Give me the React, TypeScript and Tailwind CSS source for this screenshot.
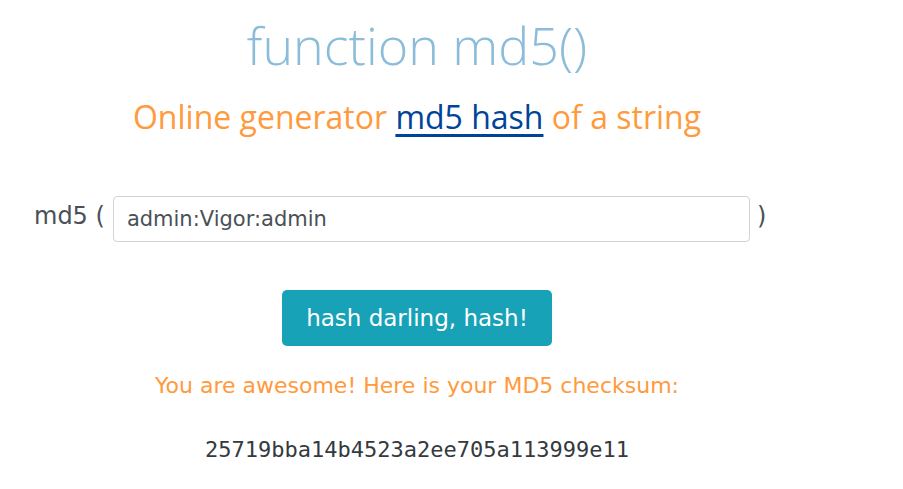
import React, { useState } from 'react';

const App = () => {
  const [value, setValue] = useState('admin:Vigor:admin');

  return (
    <div className="min-h-[489px] w-full bg-white">
      <div className="w-[834px] flex flex-col items-center">
        <h1 className="mt-[12px] text-[52px] leading-[66px] font-light text-[#8bbcd9] font-['Open_Sans',sans-serif]">
          function md5()
        </h1>
        <h2 className="mt-[18px] text-[32px] leading-[42px] text-[#ff9a3d] font-['Open_Sans',sans-serif]">
          Online generator{' '}
          <a href="#" className="text-[#004499] underline underline-offset-[5px]">md5 hash</a>{' '}
          of a string
        </h2>

        <div className="mt-[58px] ml-[34px] flex items-center self-start text-[24px] text-[#495057] font-['DejaVu_Sans',sans-serif]">
          <span className="-mt-[6px] mr-[8px]">md5 (</span>
          <input
            value={value}
            onChange={e => setValue(e.target.value)}
            className="w-[637px] h-[46px] px-[13px] rounded-[4px] border border-[#ced4da] bg-white text-[21px] text-[#495057] outline-none font-['DejaVu_Sans',sans-serif]"
          />
          <span className="-mt-[6px] ml-[7px]">)</span>
        </div>

        <button className="mt-[48px] h-[56px] px-[24px] rounded-[5px] bg-[#17a2b8] text-white text-[23px] font-['DejaVu_Sans',sans-serif]">
          hash darling, hash!
        </button>

        <p className="mt-[24px] text-[22px] leading-[32px] text-[#ff9a3d] font-['DejaVu_Sans',sans-serif]">
          You are awesome! Here is your MD5 checksum:
        </p>

        <p className="mt-[32px] text-[22px] leading-[32px] text-[#343a40] font-['DejaVu_Sans_Mono',monospace]">
          25719bba14b4523a2ee705a113999e11
        </p>
      </div>
    </div>
  );
};

export default App;
